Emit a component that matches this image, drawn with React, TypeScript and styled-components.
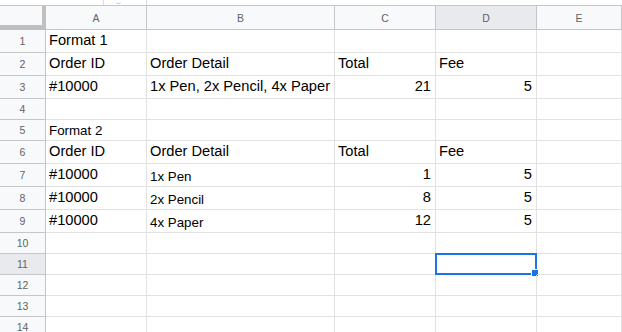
import React from "react";
import styled, { createGlobalStyle } from "styled-components";

const COLS = "46px 101px 188px 101px 101px 1fr";
const GRID = "#e2e2e3";
const HEAD_LINE = "#c4c7c5";

const GlobalStyle = createGlobalStyle`
  html, body {
    margin: 0;
    padding: 0;
    background: #fff;
    overflow: hidden;
  }
  body {
    font-family: "Liberation Sans", Arial, sans-serif;
  }
`;

const Page = styled.div`
  width: 622px;
  height: 332px;
  overflow: hidden;
  background: #fff;
`;

const Strip = styled.div`
  height: 5px;
  display: flex;
  padding-left: 103px;
`;

const StripSegment = styled.div`
  width: 42px;
  height: 5px;
  border-left: 1px solid #dadce0;
  border-right: 1px solid #dadce0;
  display: flex;
  justify-content: center;
`;

const StripMark = styled.div`
  width: 5px;
  height: 3px;
  margin-left: -14px;
  border-bottom: 1px solid #c8c8c8;
  border-radius: 0 0 3px 3px;
`;

const HeaderRow = styled.div`
  display: grid;
  grid-template-columns: ${COLS};
  height: 25px;
  box-sizing: border-box;
  border-top: 1px solid ${HEAD_LINE};
  border-bottom: 1px solid ${HEAD_LINE};
  background: #f8f9fa;
`;

const Corner = styled.div`
  box-sizing: border-box;
  margin-bottom: -1px;
  border-right: 4px solid #c0c0c0;
  border-bottom: 5px solid #c0c0c0;
  background: #f8f9fa;
`;

const ColHead = styled.div<{ $active?: boolean }>`
  display: flex;
  align-items: center;
  justify-content: center;
  box-sizing: border-box;
  border-right: 1px solid ${HEAD_LINE};
  background: ${(p) => (p.$active ? "#e8eaed" : "#f8f9fa")};
  color: #5f6368;
  font-size: 10.5px;
  padding-top: 1px;
`;

const Row = styled.div<{ $h: number }>`
  display: grid;
  grid-template-columns: ${COLS};
  height: ${(p) => p.$h}px;
`;

const RowHead = styled.div<{ $active?: boolean }>`
  display: flex;
  align-items: center;
  justify-content: center;
  box-sizing: border-box;
  border-right: 1px solid ${HEAD_LINE};
  border-bottom: 1px solid ${HEAD_LINE};
  background: ${(p) => (p.$active ? "#e8eaed" : "#f8f9fa")};
  color: #5f6368;
  font-size: 10.5px;
`;

const Cell = styled.div<{ $right?: boolean; $small?: boolean }>`
  position: relative;
  display: flex;
  align-items: flex-end;
  justify-content: ${(p) => (p.$right ? "flex-end" : "flex-start")};
  box-sizing: border-box;
  border-right: 1px solid ${GRID};
  border-bottom: 1px solid ${GRID};
  padding: 0 4px ${(p) => (p.$small ? "3px" : "4px")} 3px;
  font-size: ${(p) => (p.$small ? "13.33px" : "14.67px")};
  line-height: 1;
  color: #000;
  white-space: nowrap;
`;

const Selection = styled.div`
  position: absolute;
  top: -1px;
  left: -1px;
  width: 102px;
  height: 22px;
  box-sizing: border-box;
  border: 2px solid #1a73e8;
  pointer-events: none;
`;

const Handle = styled.div`
  position: absolute;
  right: -4px;
  bottom: -4px;
  width: 6px;
  height: 6px;
  background: #1a73e8;
  border: 1px solid #fff;
`;

type CellData = { text?: string; right?: boolean; small?: boolean };

const rows: { h: number; cells: CellData[] }[] = [
  { h: 23, cells: [{ text: "Format 1" }, {}, {}, {}, {}] },
  { h: 23, cells: [{ text: "Order ID" }, { text: "Order Detail" }, { text: "Total" }, { text: "Fee" }, {}] },
  {
    h: 23,
    cells: [
      { text: "#10000" },
      { text: "1x Pen, 2x Pencil, 4x Paper" },
      { text: "21", right: true },
      { text: "5", right: true },
      {},
    ],
  },
  { h: 21, cells: [{}, {}, {}, {}, {}] },
  { h: 21, cells: [{ text: "Format 2", small: true }, {}, {}, {}, {}] },
  { h: 23, cells: [{ text: "Order ID" }, { text: "Order Detail" }, { text: "Total" }, { text: "Fee" }, {}] },
  {
    h: 23,
    cells: [{ text: "#10000" }, { text: "1x Pen", small: true }, { text: "1", right: true }, { text: "5", right: true }, {}],
  },
  {
    h: 23,
    cells: [{ text: "#10000" }, { text: "2x Pencil", small: true }, { text: "8", right: true }, { text: "5", right: true }, {}],
  },
  {
    h: 23,
    cells: [{ text: "#10000" }, { text: "4x Paper", small: true }, { text: "12", right: true }, { text: "5", right: true }, {}],
  },
  { h: 21, cells: [{}, {}, {}, {}, {}] },
  { h: 21, cells: [{}, {}, {}, {}, {}] },
  { h: 21, cells: [{}, {}, {}, {}, {}] },
  { h: 21, cells: [{}, {}, {}, {}, {}] },
  { h: 21, cells: [{}, {}, {}, {}, {}] },
];

const letters = ["A", "B", "C", "D", "E"];
const activeCol = 3;
const activeRow = 10;

export default function App() {
  return (
    <Page>
      <GlobalStyle />
      <Strip>
        <StripSegment>
          <StripMark />
        </StripSegment>
      </Strip>
      <HeaderRow>
        <Corner />
        {letters.map((l, i) => (
          <ColHead key={l} $active={i === activeCol}>
            {l}
          </ColHead>
        ))}
      </HeaderRow>
      {rows.map((r, ri) => (
        <Row key={ri} $h={r.h}>
          <RowHead $active={ri === activeRow}>{ri + 1}</RowHead>
          {r.cells.map((c, ci) => (
            <Cell key={ci} $right={c.right} $small={c.small}>
              {c.text}
              {ri === activeRow && ci === activeCol && (
                <Selection>
                  <Handle />
                </Selection>
              )}
            </Cell>
          ))}
        </Row>
      ))}
    </Page>
  );
}
